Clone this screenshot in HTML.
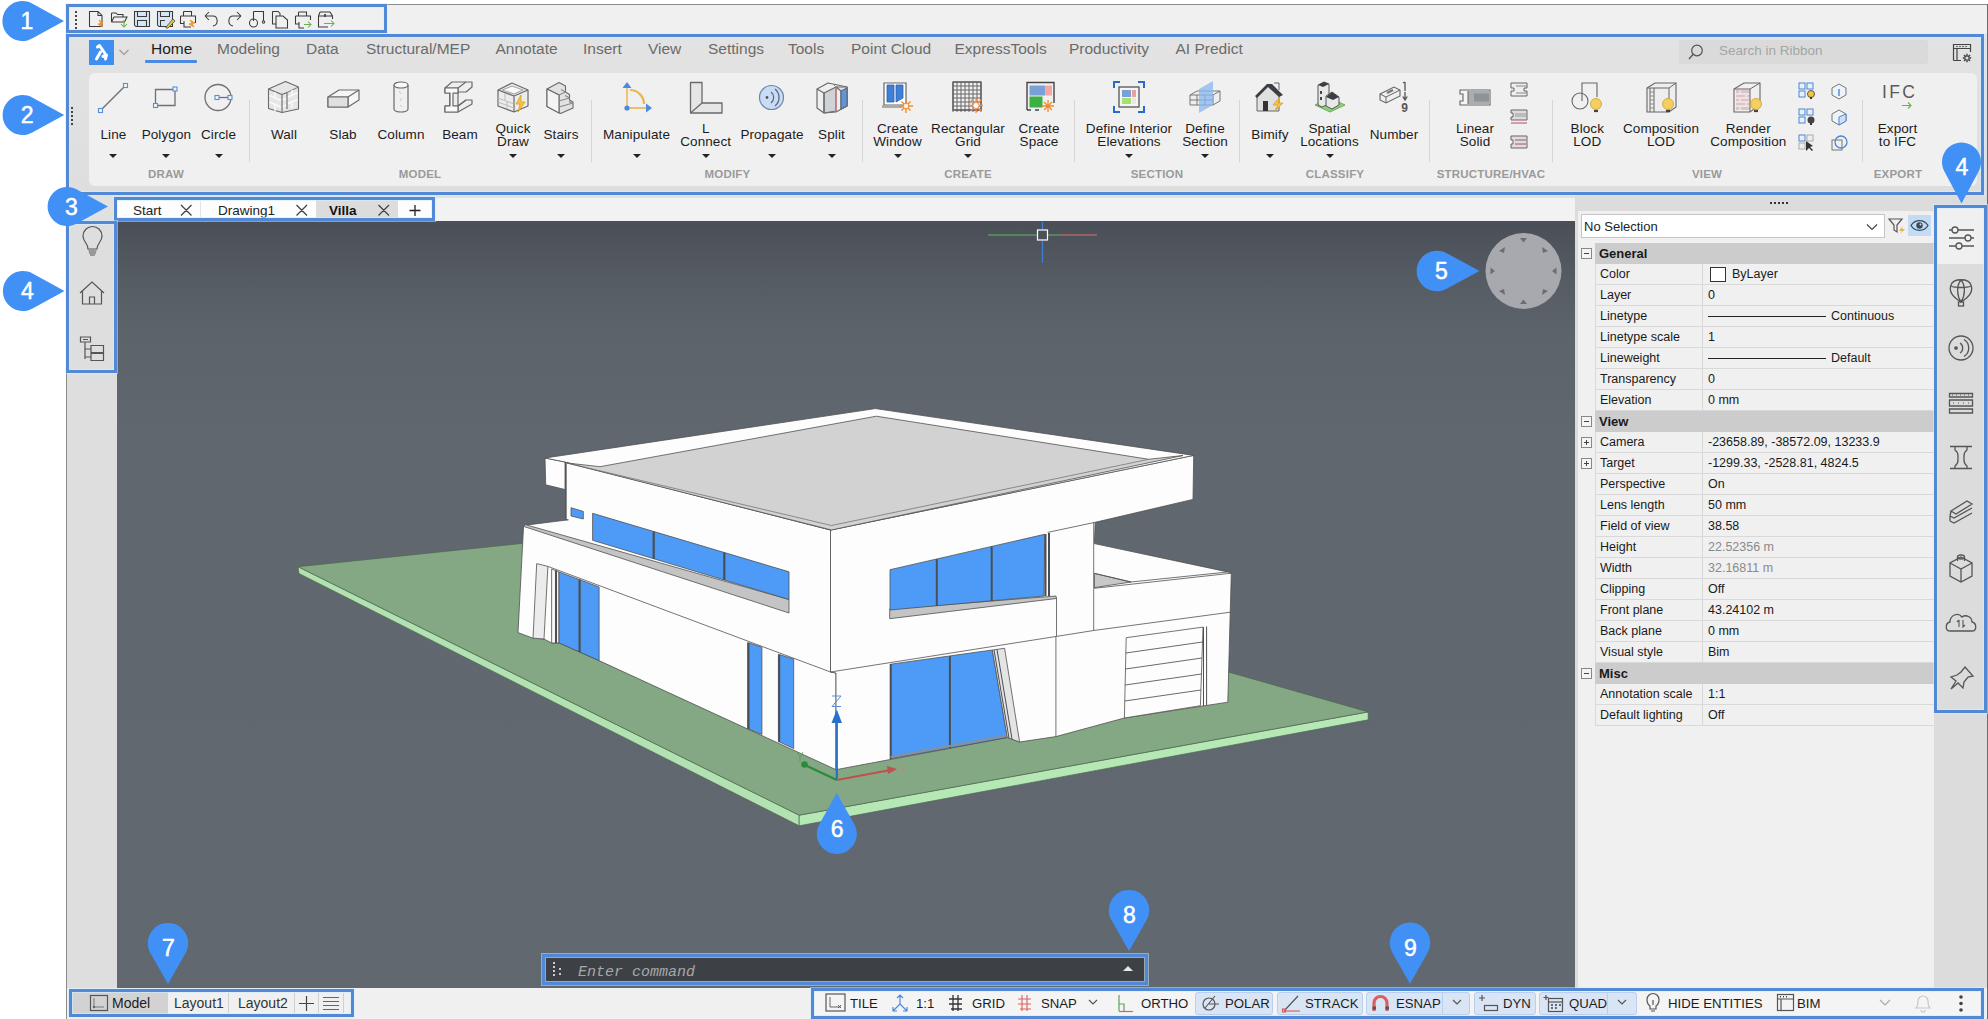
<!DOCTYPE html><html><head><meta charset="utf-8"><style>*{margin:0;padding:0;box-sizing:border-box}
html,body{width:1988px;height:1019px;overflow:hidden;background:#fff;font-family:"Liberation Sans",sans-serif;color:#1a1a1a}
.a{position:absolute;overflow:visible}
.box{position:absolute;border:3px solid #5189d6;box-shadow:inset 0 0 0 1px rgba(210,238,255,0.6),0 0 0 1px rgba(210,238,255,0.5)}
.lbl{position:absolute;font-size:13.5px;line-height:13px;letter-spacing:0.1px;text-align:center;color:#1c1c1c;white-space:nowrap}
.grp{position:absolute;font-size:11.5px;font-weight:bold;color:#9a9a9a;text-align:center;letter-spacing:0.2px;white-space:nowrap}
.tab{position:absolute;font-size:15.5px;color:#6a6a6a;top:41px;white-space:nowrap}
.dd{position:absolute;width:0;height:0;border-left:4px solid transparent;border-right:4px solid transparent;border-top:4px solid #222}
.sep{position:absolute;width:1px;background:#d6d6d6;top:100px;height:62px}
.pr{position:absolute;left:1595px;width:339px;height:21px;border-bottom:1px solid #d9d9d9;font-size:12.5px;line-height:20px}
.pr .k{position:absolute;left:5px;top:0}
.pr .v{position:absolute;left:113px;top:0}
.pr .c{position:absolute;left:107px;top:0;width:1px;height:21px;background:#d9d9d9}
.ph{position:absolute;left:1595px;width:339px;height:21px;background:#cccccc;font-size:13px;font-weight:bold;line-height:21px;padding-left:4px}
.pm{position:absolute;left:1581px;width:11px;height:11px;border:1px solid #888;background:#f4f4f4}
.pm:after{content:"";position:absolute;left:2px;top:4px;width:5px;height:1px;background:#444}
.pp:before{content:"";position:absolute;left:4px;top:2px;width:1px;height:5px;background:#444}
.st{position:absolute;top:996px;font-size:13.2px;line-height:16px;color:#1c1c1c;white-space:nowrap}
.sb{position:absolute;top:992px;height:23px;background:#d9e5f5;border:1px solid #b9cfee;border-radius:3px}
.cn{font-family:"Liberation Sans",sans-serif}
</style></head><body><div class="a" style="left:66px;top:4px;width:1922px;height:1015px;background:#f0f0f0"></div>
<div class="a" style="left:66px;top:4px;width:1922px;height:1px;background:#8c8c8c"></div>
<div class="a" style="left:66px;top:4px;width:1px;height:1015px;background:#8c8c8c"></div>
<div class="a" style="left:1987px;top:4px;width:1px;height:1015px;background:#6c6c6c"></div>
<div class="a" style="left:67px;top:5px;width:1920px;height:29px;background:#f0f0f0"></div>
<div class="a" style="left:67px;top:34px;width:1920px;height:161px;background:linear-gradient(#e3e3e3,#dedede)"></div>
<div class="a" style="left:89px;top:73px;width:1888px;height:113px;background:#f0f0f0;border-radius:6px"></div>
<div class="a" style="left:67px;top:195px;width:1508px;height:26px;background:#e1e1e1"></div>
<div class="a" style="left:117px;top:198px;width:1458px;height:23px;background:#f2f2f2"></div>
<div class="a" style="left:67px;top:221px;width:50px;height:767px;background:#dedede"></div>
<div class="a" style="left:117px;top:221px;width:1458px;height:767px;background:linear-gradient(#4a4f57 0px,#565c64 60px,#5c636b 110px,#60676f 220px,#61686f 767px)"></div>
<div class="a" style="left:1575px;top:195px;width:360px;height:793px;background:#dcdcdc"></div>
<div class="a" style="left:1578px;top:211px;width:356px;height:777px;background:#f0f0f0"></div>
<div class="a" style="left:1935px;top:195px;width:52px;height:793px;background:#dcdcdc"></div>
<div class="a" style="left:1937px;top:208px;width:47px;height:56px;background:#f0f0f0"></div>
<div class="a" style="left:67px;top:988px;width:1920px;height:31px;background:#f0f0f0"></div>
<svg class="a" style="left:66px;top:4px" width="330" height="30" viewBox="66 4 330 30" fill="none" stroke="#3a3a3a" stroke-width="1.05">
<g fill="#111" stroke="none"><circle cx="76" cy="12" r="1"/><circle cx="76" cy="16" r="1"/><circle cx="76" cy="20" r="1"/><circle cx="76" cy="24" r="1"/><circle cx="76" cy="28" r="1"/></g>
<path d="M89.5,11.5 H98 L102,15.5 V26.5 H89.5 Z M98,11.5 V15.5 H102"/>
<path d="M99,20 L103,23 L100,23.5 L102,27 L98,24 L101,23.5 Z" fill="#f0a030" stroke="#e89020" stroke-width="0.8"/>
<path d="M111.5,13 H116 L117.5,14.5 H123 V17 M111.5,13 V22 L114,17 H127 L124.5,22 H111.5"/>
<path d="M124,20 V27 M121,24 L124,27 L127,24" stroke="#6ab04c"/>
<path d="M134.5,11.5 H149.5 V26.5 H136 L134.5,25 Z" fill="#d6e6f7"/>
<path d="M137.5,11.5 V16.5 H146.5 V11.5 M137.5,26.5 V20.5 H146.5 V26.5" />
<path d="M157.5,11.5 H172.5 V26.5 H159 L157.5,25 Z" fill="#d6e6f7"/>
<path d="M160.5,11.5 V16.5 H169.5 V11.5 M160.5,26.5 V20.5 H165"/>
<path d="M166,27 L173,19 L175,21 L168,28 H166 Z" fill="#e8c840" stroke="#555" stroke-width="0.9"/>
<path d="M183.5,11.5 H191.5 V16 M183.5,16 V11.5 M180.5,16 H195.5 V23 M180.5,16 V23.5 H184 M184,21 V27 H191"/>
<path d="M190,20 L195,23 L192,23.5 L194,27 L189,24 L192,23.5 Z" fill="#f0a030" stroke="#e89020" stroke-width="0.8"/>
<path d="M205,16 L209,12 M205,16 L209,20 M205,16 H213 C218,16 219,25 213,26"/>
<path d="M241,16 L237,12 M241,16 L237,20 M241,16 H233 C228,16 227,25 233,26"/>
<path d="M253.5,11.5 H263.5 V21 M253.5,11.5 V21"/>
<circle cx="253.5" cy="23" r="4"/><circle cx="263.5" cy="22" r="1.2"/>
<path d="M272.5,11.5 H278 L280,13.5 V16 M272.5,11.5 V24 H276 M276,16 H283 L287.5,20 V28 H276 Z"/>
<path d="M298.5,12 H306.5 V16 M298.5,16 V12 M295.5,16 H310.5 V20 M295.5,16 V24 H299 M299,22 V28 H304"/>
<path d="M304,24.5 H311 M308,21.5 L311,24.5 L308,27.5" stroke="#6ab04c"/>
<path d="M320,12 H330 L332.5,16 V19 M320,12 L318.5,16 V27 H328 M318.5,16 H332.5"/>
<path d="M325,14 V17" stroke-width="1.6"/>
<path d="M324,23.5 H334 M331,20.5 L334,23.5 L331,26.5" stroke="#6ab04c"/>
</svg>

<div class="tab" style="left:151px;top:40px;color:#1e1e1e">Home</div>
<div class="tab" style="left:217px;top:40px;color:#6b6b6b">Modeling</div>
<div class="tab" style="left:306px;top:40px;color:#6b6b6b">Data</div>
<div class="tab" style="left:366px;top:40px;color:#6b6b6b">Structural/MEP</div>
<div class="tab" style="left:495.5px;top:40px;color:#6b6b6b">Annotate</div>
<div class="tab" style="left:583px;top:40px;color:#6b6b6b">Insert</div>
<div class="tab" style="left:648px;top:40px;color:#6b6b6b">View</div>
<div class="tab" style="left:708px;top:40px;color:#6b6b6b">Settings</div>
<div class="tab" style="left:788px;top:40px;color:#6b6b6b">Tools</div>
<div class="tab" style="left:851px;top:40px;color:#6b6b6b">Point Cloud</div>
<div class="tab" style="left:954.5px;top:40px;color:#6b6b6b">ExpressTools</div>
<div class="tab" style="left:1069px;top:40px;color:#6b6b6b">Productivity</div>
<div class="tab" style="left:1175.5px;top:40px;color:#6b6b6b">AI Predict</div>
<div class="a" style="left:145px;top:60px;width:52px;height:3px;background:#4a8ae0;border-radius:1px"></div>
<div class="a" style="left:89px;top:40px;width:25px;height:25px;background:#3d8ff2"></div>
<svg class="a" style="left:89px;top:40px" width="25" height="25" viewBox="0 0 25 25"><path d="M8.5,7 L10.5,5.5 L16,13.5 M11.5,12 L7.5,19 M14,16.5 L17.5,15 L16.5,19" stroke="#fff" stroke-width="3" fill="none" stroke-linecap="round" stroke-linejoin="round"/></svg>
<svg class="a" style="left:118px;top:47px" width="12" height="10" viewBox="0 0 12 10"><path d="M1.5,3 L6,7.5 L10.5,3" stroke="#9a9a9a" stroke-width="1.2" fill="none"/></svg>
<div class="a" style="left:1679px;top:40px;width:249px;height:24px;background:#dadada;border-radius:3px"></div>
<svg class="a" style="left:1686px;top:42px" width="20" height="20" viewBox="0 0 20 20"><circle cx="11" cy="8.5" r="5.3" stroke="#555" stroke-width="1.2" fill="none"/><path d="M7.2,12.3 L3,17" stroke="#555" stroke-width="1.3"/></svg>
<div class="a" style="left:1719px;top:43px;font-size:13.5px;color:#a5a5a5">Search in Ribbon</div>
<svg class="a" style="left:1950px;top:41px" width="24" height="24" viewBox="0 0 24 24" fill="none" stroke="#444" stroke-width="1.2"><path d="M3.5,19.5 V3.5 H20.5 V11 M3.5,7.5 H20.5 M3.5,19.5 H11 M7,7.5 V19.5"/><g fill="#444" stroke="none"><circle cx="7" cy="5.5" r=".8"/><circle cx="10" cy="5.5" r=".8"/><circle cx="13" cy="5.5" r=".8"/><circle cx="16" cy="5.5" r=".8"/></g><circle cx="17" cy="17" r="2.2"/><path d="M17,12.8 V14.5 M17,19.5 V21.2 M12.8,17 H14.5 M19.5,17 H21.2 M14,14 L15.2,15.2 M18.8,18.8 L20,20 M20,14 L18.8,15.2 M15.2,18.8 L14,20" stroke-width="1.4"/></svg>
<svg class="a" style="left:70px;top:106px" width="4" height="20" viewBox="0 0 4 20"><g fill="#111"><circle cx="2" cy="2" r="1"/><circle cx="2" cy="6" r="1"/><circle cx="2" cy="10" r="1"/><circle cx="2" cy="14" r="1"/><circle cx="2" cy="18" r="1"/></g></svg>
<svg class="a" style="left:97.4px;top:81px" width="32" height="32" viewBox="0 0 32 32"><path d="M4,29 L28,5" stroke="#707070" stroke-width="1.4"/><rect x="1.5" y="27.5" width="4" height="4" fill="#eef4fc" stroke="#5a8fd8" stroke-width="1.1"/><rect x="26.5" y="2.5" width="4" height="4" fill="#eef4fc" stroke="#5a8fd8" stroke-width="1.1"/></svg>
<div class="lbl" style="left:53.4px;top:128px;width:120px">Line</div>
<div class="dd" style="left:109.4px;top:154px"></div>
<svg class="a" style="left:150.4px;top:81px" width="32" height="32" viewBox="0 0 32 32"><path d="M5.5,8.5 H25 V24.5 H5.5 Z" stroke="#707070" stroke-width="1.3" fill="none"/><rect x="23.0" y="6.0" width="4" height="4" fill="#eef4fc" stroke="#5a8fd8" stroke-width="1.1"/><rect x="3.5" y="22.5" width="4" height="4" fill="#eef4fc" stroke="#5a8fd8" stroke-width="1.1"/></svg>
<div class="lbl" style="left:106.4px;top:128px;width:120px">Polygon</div>
<div class="dd" style="left:162.4px;top:154px"></div>
<svg class="a" style="left:202.5px;top:81px" width="32" height="32" viewBox="0 0 32 32"><circle cx="15" cy="16.5" r="13" stroke="#707070" stroke-width="1.3" fill="none"/><path d="M14,16.5 H27" stroke="#707070" stroke-width="1.3"/><rect x="12.0" y="14.5" width="4" height="4" fill="#eef4fc" stroke="#5a8fd8" stroke-width="1.1"/><rect x="25.0" y="14.5" width="4" height="4" fill="#eef4fc" stroke="#5a8fd8" stroke-width="1.1"/></svg>
<div class="lbl" style="left:158.5px;top:128px;width:120px">Circle</div>
<div class="dd" style="left:214.5px;top:154px"></div>
<svg class="a" style="left:268.0px;top:81px" width="32" height="32" viewBox="0 0 32 32"><g stroke="#6a6a6a" stroke-width="1.1" stroke-linejoin="round"><path d="M0.5,8 L17.5,0.5 L30.5,6 V28 L14,31.5 L0.5,27.5 Z" fill="#e6e6e6"/><path d="M0.5,8 L14,13.5 V31.5 M14,13.5 L19,11.5 V28" fill="none"/><path d="M19,11.5 L30.5,6" fill="none" stroke="#888"/><path d="M1.5,14.5 L13,19.5 M1.5,21 L13,26 M15,19 L18,17.5 M15,25.5 L18,24 M20,16 L29.5,12 M20,22.5 L29.5,18.5 M7,11 V17 M7,24 V30 M24,9 V15 M24,21 V27" stroke="#fafafa" stroke-width="1.4" fill="none"/></g></svg>
<div class="lbl" style="left:224.0px;top:128px;width:120px">Wall</div>
<svg class="a" style="left:327.0px;top:81px" width="32" height="32" viewBox="0 0 32 32"><g stroke="#6a6a6a" stroke-width="1.2" stroke-linejoin="round"><path d="M1,16 L12,9 L32,9 L32,19 L21,26 L1,26 Z" fill="#f6f6f6"/><path d="M1,16 L21,16 L32,9 M21,16 V26" fill="none"/><path d="M1,16 H21 V26 H1 Z" fill="#e0e0e0"/></g></svg>
<div class="lbl" style="left:283.0px;top:128px;width:120px">Slab</div>
<svg class="a" style="left:385.0px;top:81px" width="32" height="32" viewBox="0 0 32 32"><g stroke="#6a6a6a" stroke-width="1.2"><path d="M9,4 V28 A7,3 0 0 0 23,28 V4" fill="#f0f0f0"/><ellipse cx="16" cy="4" rx="7" ry="3" fill="#fafafa"/><path d="M14,10 l2,3 M17,17 l-2,3 M15,24 l2,2" stroke="#c8c8c8" stroke-width="1"/></g></svg>
<div class="lbl" style="left:341.0px;top:128px;width:120px">Column</div>
<svg class="a" style="left:444.0px;top:81px" width="32" height="32" viewBox="0 0 32 32"><g stroke="#6a6a6a" stroke-width="1.2" stroke-linejoin="round" fill="#eeeeee"><path d="M1,31 V25 H6 V12 H1 V7 L8,1 H28 V6 L22,11 H10 L14,12 V25 L22,19 H28 V23 L14,31 Z"/><path d="M1,7 H14 L22,1 M14,7 V12 H10 M1,25 H14 V31 M14,25 L22,19 M6,12 V25" fill="none"/><path d="M1,7 H14 V12 H9 V25 H14 V31 H1 V25 H6 V12 H1 Z" fill="#f8f8f8"/></g></svg>
<div class="lbl" style="left:400.0px;top:128px;width:120px">Beam</div>
<svg class="a" style="left:497.0px;top:81px" width="32" height="32" viewBox="0 0 32 32"><g stroke="#6a6a6a" stroke-width="1.2" stroke-linejoin="round"><path d="M1,9 L15,2 L31,9 V25 L17,31 L1,25 Z" fill="#ececec"/><path d="M1,9 L17,15 L31,9 M17,15 V31" fill="none"/><path d="M5,9 L15,5 L26,9 L17,13 Z" fill="#fafafa" stroke="#aaa"/><path d="M1,17 L17,23 M1,21 L17,27 M8,12 V19 M10,21 V27" stroke="#bbb" stroke-width="1" fill="none"/></g><path d="M24,14 L19,23 H23 L21,31 L28,21 H24 Z" fill="#f5c542" stroke="#e0a020" stroke-width="0.8"/></svg>
<div class="lbl" style="left:453.0px;top:122px;width:120px">Quick</div>
<div class="lbl" style="left:453.0px;top:135px;width:120px">Draw</div>
<div class="dd" style="left:509.0px;top:154px"></div>
<svg class="a" style="left:545.0px;top:81px" width="32" height="32" viewBox="0 0 32 32"><g stroke="#6a6a6a" stroke-width="1.1" stroke-linejoin="round"><path d="M2,8 L14,1.5 L20.5,5 V11 L24.5,13.5 V19 L28,21 V27 L15.5,32.5 L2,25.5 Z" fill="#e2e2e2"/><path d="M2,8 L14,14 V32" fill="none"/><path d="M2,8 L14,14 L14,32 L2,25.5 Z" fill="#f4f4f4"/><path d="M14,14 L20.5,11 M14,20 L24.5,17 M14,26 L28,22 M20.5,11 L16,8.5 M24.5,17 L20,14.5 M28,23 L24,20.5" fill="none" stroke="#8a8a8a"/></g></svg>
<div class="lbl" style="left:501.0px;top:128px;width:120px">Stairs</div>
<div class="dd" style="left:557.0px;top:154px"></div>
<svg class="a" style="left:620.5px;top:81px" width="32" height="32" viewBox="0 0 32 32"><path d="M6,7 V27 H25" stroke="#e8c070" stroke-width="1.8" fill="none"/><path d="M9,9 A14,14 0 0 1 23,23" stroke="#e8b850" stroke-width="2.2" fill="none"/><path d="M6,1 L10.5,7 H1.5 Z M31,27 L25,22.5 V31.5 Z" fill="#4a8ae0"/><circle cx="6" cy="27" r="2.6" fill="#4a8ae0"/></svg>
<div class="lbl" style="left:576.5px;top:128px;width:120px">Manipulate</div>
<div class="dd" style="left:632.5px;top:154px"></div>
<svg class="a" style="left:689.7px;top:81px" width="32" height="32" viewBox="0 0 32 32"><g stroke="#6a6a6a" stroke-width="1.3" stroke-linejoin="round" fill="#e6e6e6"><path d="M0.5,1.5 H12 V22 H32 V32 H0.5 Z"/><path d="M0.5,32 L12,22" fill="none"/></g></svg>
<div class="lbl" style="left:645.7px;top:122px;width:120px">L</div>
<div class="lbl" style="left:645.7px;top:135px;width:120px">Connect</div>
<div class="dd" style="left:701.7px;top:154px"></div>
<svg class="a" style="left:756.0px;top:81px" width="32" height="32" viewBox="0 0 32 32"><circle cx="15.5" cy="16.5" r="12" fill="#c9dcf5" stroke="#6f86a8" stroke-width="1.2"/><circle cx="11" cy="16.5" r="1.4" fill="#555"/><path d="M15,11 A7,7 0 0 1 15,22 M19,8 A11,11 0 0 1 19,25" stroke="#5a6a80" stroke-width="1.3" fill="none"/></svg>
<div class="lbl" style="left:712.0px;top:128px;width:120px">Propagate</div>
<div class="dd" style="left:768.0px;top:154px"></div>
<svg class="a" style="left:815.5px;top:81px" width="32" height="32" viewBox="0 0 32 32"><g stroke="#6a6a6a" stroke-width="1.2" stroke-linejoin="round"><path d="M1,8 L12,2 L31,6 V25 L20,31 L8,32 L1,27 Z" fill="#efefef"/><path d="M8,12 L20,6 V30 L8,32 Z" fill="#cfd2d6"/><path d="M20,6 L31,6 V25 L25,28 L25,10 Z" fill="#d8e6f8"/><path d="M25,10 L31,7 V25 L25,28 Z" fill="#5e95e0"/><path d="M1,8 L8,12 V32" fill="none"/></g><path d="M18,4 L20,6 V30" stroke="#e07070" stroke-width="1" fill="none"/></svg>
<div class="lbl" style="left:771.5px;top:128px;width:120px">Split</div>
<div class="dd" style="left:827.5px;top:154px"></div>
<svg class="a" style="left:881.5px;top:81px" width="32" height="32" viewBox="0 0 32 32"><path d="M2,2 H24 V24 H2 Z" fill="#fff" stroke="#666" stroke-width="1.2"/><path d="M5,4 H12 V21 H5 Z M14,4 H21 V17 L14,21 Z" fill="#3f7fd8" stroke="#2a5fa8" stroke-width="0.8"/><path d="M0,24 H22 L20,27 H0 Z" fill="#aaa"/><g stroke="#f08a30" stroke-width="1.4"><path d="M24,18 V32 M17,25 H31 M19.5,20.5 L28.5,29.5 M28.5,20.5 L19.5,29.5"/></g><circle cx="24" cy="25" r="2.8" fill="#fff5e0" stroke="#f08a30" stroke-width="1"/></svg>
<div class="lbl" style="left:837.5px;top:122px;width:120px">Create</div>
<div class="lbl" style="left:837.5px;top:135px;width:120px">Window</div>
<div class="dd" style="left:893.5px;top:154px"></div>
<svg class="a" style="left:952.0px;top:81px" width="32" height="32" viewBox="0 0 32 32"><path d="M1,1 V31 M5,1 V31 M9,1 V31 M13,1 V31 M17,1 V31 M21,1 V31 M25,1 V31 M29,1 V31 M1,1 H29 M1,5 H29 M1,9 H29 M1,13 H29 M1,17 H29 M1,21 H29 M1,25 H29 M1,29 H29 " stroke="#666" stroke-width="1" fill="none"/><rect x="1" y="1" width="28" height="28" fill="none" stroke="#555" stroke-width="1.2"/><g stroke="#f09050" stroke-width="1.3"><path d="M24,17 V32 M17,24.5 H31 M19,19 L29,30 M29,19 L19,30"/></g><circle cx="24" cy="24.5" r="3" fill="#fff" stroke="#f09050"/></svg>
<div class="lbl" style="left:908.0px;top:122px;width:120px">Rectangular</div>
<div class="lbl" style="left:908.0px;top:135px;width:120px">Grid</div>
<div class="dd" style="left:964.0px;top:154px"></div>
<svg class="a" style="left:1023.0px;top:81px" width="32" height="32" viewBox="0 0 32 32"><path d="M4,29 V1.5 H31 V22 M4,29 H8 M12,29 H16" stroke="#444" stroke-width="1.4" fill="none"/><rect x="6.5" y="4.5" width="16" height="10" fill="#7aa0d8"/><rect x="23" y="4.5" width="6" height="10" fill="#f0a8a0"/><rect x="6.5" y="15.5" width="13" height="11" fill="#3cb043"/><g stroke="#f08a30" stroke-width="1.3"><path d="M25,19 V31 M19,25 H31 M21,21 L29,29 M29,21 L21,29"/></g></svg>
<div class="lbl" style="left:979.0px;top:122px;width:120px">Create</div>
<div class="lbl" style="left:979.0px;top:135px;width:120px">Space</div>
<svg class="a" style="left:1113.0px;top:81px" width="32" height="32" viewBox="0 0 32 32"><path d="M1,7 V1 H7 M25,1 H31 V7 M1,25 V31 H7 M25,31 H31 V25" stroke="#2a6ad0" stroke-width="2" fill="none"/><rect x="6" y="6" width="20" height="20" fill="#f4f4f4" stroke="#555" stroke-width="1.3"/><rect x="9" y="9" width="9" height="7" fill="#7aa0d8"/><rect x="19" y="9" width="4" height="7" fill="#e8a0a0"/><rect x="9" y="17" width="9" height="6" fill="#a8e070"/><rect x="19" y="17" width="4" height="6" fill="#e8e8e8"/></svg>
<div class="lbl" style="left:1069.0px;top:122px;width:120px">Define Interior</div>
<div class="lbl" style="left:1069.0px;top:135px;width:120px">Elevations</div>
<div class="dd" style="left:1125.0px;top:154px"></div>
<svg class="a" style="left:1189.0px;top:81px" width="32" height="32" viewBox="0 0 32 32"><g stroke="#777" stroke-width="1" fill="#eeeeee"><path d="M1,14 L8,10 H31 V20 L24,24 H1 Z"/><path d="M1,14 H24 L31,10 M24,14 V24 M1,19 H24 M8,14 V24 M16,14 V24" fill="none"/></g><path d="M10,8 L24,0 V24 L10,32 Z" fill="#8ab8f0" opacity="0.75"/></svg>
<div class="lbl" style="left:1145.0px;top:122px;width:120px">Define</div>
<div class="lbl" style="left:1145.0px;top:135px;width:120px">Section</div>
<div class="dd" style="left:1201.0px;top:154px"></div>
<svg class="a" style="left:1254.0px;top:81px" width="32" height="32" viewBox="0 0 32 32"><path d="M3,14 L14,3 L25,14 V30 H3 Z" fill="#e0e0e0" stroke="#666" stroke-width="1"/><path d="M1,15 L13,3 H18 L29,14 L25,16 L14,6 L3,17 Z" fill="#3a3f45"/><rect x="9" y="20" width="5" height="10" fill="#333"/><path d="M20,2 H25 V9" stroke="#666" fill="none"/><path d="M26,16 L19,24 H24 L20,31 L29,22 H24 Z" fill="#f5c542" stroke="#e0a020" stroke-width="0.8"/></svg>
<div class="lbl" style="left:1210.0px;top:128px;width:120px">Bimify</div>
<div class="dd" style="left:1266.0px;top:154px"></div>
<svg class="a" style="left:1313.5px;top:81px" width="32" height="32" viewBox="0 0 32 32"><path d="M1,24 L16,31 L31,24 L16,17 Z" fill="#8fd080" stroke="#6ab04c"/><path d="M4,4 L10,1 L15,3 V23 L8,26 L4,24 Z" fill="#e8e8e8" stroke="#555"/><path d="M4,4 L10,1 L15,3 L9,6 Z" fill="#3a3f45"/><rect x="6" y="10" width="2" height="3" fill="#444"/><rect x="6" y="16" width="2" height="3" fill="#444"/><path d="M12,15 L18,11 L25,16 V24 L18,28 L12,25 Z" fill="#e8e8e8" stroke="#555"/><path d="M12,16 L18,11 L25,16 L19,19 Z" fill="#3a3f45"/></svg>
<div class="lbl" style="left:1269.5px;top:122px;width:120px">Spatial</div>
<div class="lbl" style="left:1269.5px;top:135px;width:120px">Locations</div>
<div class="dd" style="left:1325.5px;top:154px"></div>
<svg class="a" style="left:1378.0px;top:81px" width="32" height="32" viewBox="0 0 32 32"><path d="M2,13 L16,6 L22,9 V15 L8,22 L2,19 Z" fill="#eeeeee" stroke="#666" stroke-width="1.1"/><path d="M2,13 L8,16 L22,9 M8,16 V22" stroke="#666" fill="none"/><path d="M9,12 L15,9" stroke="#777" stroke-width="2"/><path d="M27,1 V10 M25,2 L27,1 M27,11 V18 M24.8,15.5 L27,19 L29.2,15.5" stroke="#555" stroke-width="1.3" fill="none"/><text x="23.2" y="31" font-size="12" font-weight="bold" fill="#555" class="cn">9</text></svg>
<div class="lbl" style="left:1334.0px;top:128px;width:120px">Number</div>
<svg class="a" style="left:1459.0px;top:81px" width="32" height="32" viewBox="0 0 32 32"><path d="M1,9 H31 V24 H1 V20 H4 V13 H1 Z" fill="#f4f4f4" stroke="#666" stroke-width="1.1"/><rect x="9" y="10" width="22" height="13" fill="#a9adb2"/><rect x="15" y="12.5" width="15" height="8" fill="#8e9398"/><path d="M9,10 V23" stroke="#666"/></svg>
<div class="lbl" style="left:1415.0px;top:122px;width:120px">Linear</div>
<div class="lbl" style="left:1415.0px;top:135px;width:120px">Solid</div>
<svg class="a" style="left:1571.3px;top:81px" width="32" height="32" viewBox="0 0 32 32"><circle cx="9" cy="20" r="8" fill="none" stroke="#666" stroke-width="1.1"/><path d="M11,20 V2 H26 V16" stroke="#666" stroke-width="1.1" fill="none"/><circle cx="25" cy="23" r="5.5" fill="#f5cf60" stroke="#caa030" stroke-width="0.8"/><path d="M23,30 H27" stroke="#444" stroke-width="2.2"/></svg>
<div class="lbl" style="left:1527.3px;top:122px;width:120px">Block</div>
<div class="lbl" style="left:1527.3px;top:135px;width:120px">LOD</div>
<svg class="a" style="left:1645.0px;top:81px" width="32" height="32" viewBox="0 0 32 32"><path d="M2,7 L10,2 H31 V26 L24,31 H2 Z" fill="#eeeeee" stroke="#666" stroke-width="1.1"/><path d="M2,7 H24 L31,2 M24,7 V31 M5,7 V31 M9,7 V31" stroke="#666" fill="none"/><path d="M5,11 H9 M5,15 H9 M5,19 H9 M5,23 H9 M5,27 H9" stroke="#888"/><circle cx="23" cy="23" r="5.5" fill="#f5cf60" stroke="#caa030" stroke-width="0.8"/><path d="M21,30 H25" stroke="#444" stroke-width="2.2"/></svg>
<div class="lbl" style="left:1601.0px;top:122px;width:120px">Composition</div>
<div class="lbl" style="left:1601.0px;top:135px;width:120px">LOD</div>
<svg class="a" style="left:1732.3px;top:81px" width="32" height="32" viewBox="0 0 32 32"><path d="M2,8 L12,2 H28 V24 L18,31 H2 Z" fill="#f0f0f0" stroke="#666" stroke-width="1.1"/><path d="M4,9 H18 V29 H4 Z" fill="#dcc4c8"/><path d="M4,13 H18 M4,17 H18 M4,21 H18 M4,25 H18 M8,9 V13 M14,13 V17 M8,17 V21 M14,21 V25 M8,25 V29" stroke="#f4eaea" stroke-width="1.3"/><path d="M2,8 H18 L28,2 M18,8 V31" stroke="#666" fill="none"/><circle cx="24" cy="23" r="5.5" fill="#f5cf60" stroke="#caa030" stroke-width="0.8"/><path d="M22,30 H26" stroke="#444" stroke-width="2.2"/></svg>
<div class="lbl" style="left:1688.3px;top:122px;width:120px">Render</div>
<div class="lbl" style="left:1688.3px;top:135px;width:120px">Composition</div>
<svg class="a" style="left:1881.5px;top:81px" width="32" height="32" viewBox="0 0 32 32"><text x="0" y="17" font-size="17.5" fill="#5a5a5a" class="cn" letter-spacing="2.4">IFC</text><path d="M20,24.5 H29 M26,21.5 L29,24.5 L26,27.5" stroke="#6ab04c" stroke-width="1.1" fill="none"/></svg>
<div class="lbl" style="left:1837.5px;top:122px;width:120px">Export</div>
<div class="lbl" style="left:1837.5px;top:135px;width:120px">to IFC</div>
<svg class="a" style="left:1509px;top:80px" width="20" height="20" viewBox="0 0 20 20"><path d="M2,3 H18 V8 H15 V11 H18 V16 H2 V11 H5 V8 H2 Z" fill="#eee" stroke="#666"/><path d="M7,6 H18 M7,13 H18" stroke="#888"/></svg>
<svg class="a" style="left:1509px;top:106px" width="20" height="20" viewBox="0 0 20 20"><path d="M2,4 H18 V14 H2 V11 H4 V7 H2 Z" fill="#ddd" stroke="#666"/><path d="M6,8 H17 M6,10 H17" stroke="#999"/><path d="M2,17 H18" stroke="#d06070" stroke-width="1.2"/></svg>
<svg class="a" style="left:1509px;top:132px" width="20" height="20" viewBox="0 0 20 20"><path d="M2,4 H18 V16 H2 V12 H4 V8 H2 Z" fill="#ddd" stroke="#666"/><path d="M6,8 H17 M6,12 H17" stroke="#b05060"/></svg>
<svg class="a" style="left:1797px;top:81px" width="20" height="20" viewBox="0 0 20 20"><rect x="2" y="2" width="6" height="6" fill="#e8f0fc" stroke="#4a86d4"/><rect x="10" y="2" width="6" height="6" fill="#e8f0fc" stroke="#4a86d4"/><rect x="2" y="10" width="6" height="6" fill="#e8f0fc" stroke="#4a86d4"/><circle cx="14" cy="13" r="3.5" fill="#f5c542" stroke="#555"/><path d="M13,17 H15" stroke="#333" stroke-width="2"/></svg>
<svg class="a" style="left:1797px;top:107px" width="20" height="20" viewBox="0 0 20 20"><rect x="2" y="2" width="6" height="6" fill="#e8f0fc" stroke="#4a86d4"/><rect x="10" y="2" width="6" height="6" fill="#e8f0fc" stroke="#4a86d4"/><rect x="2" y="10" width="6" height="6" fill="#e8f0fc" stroke="#4a86d4"/><circle cx="14" cy="13" r="3.5" fill="#444"/><path d="M13,17 H15" stroke="#333" stroke-width="2"/></svg>
<svg class="a" style="left:1797px;top:133px" width="20" height="20" viewBox="0 0 20 20"><rect x="2" y="2" width="6" height="6" fill="#e8f0fc" stroke="#4a86d4"/><rect x="10" y="2" width="6" height="6" fill="#eee" stroke="#aaa"/><rect x="2" y="10" width="6" height="6" fill="#eee" stroke="#aaa"/><path d="M9,8 L9,18 L12,15 L15,18 L16,17 L13,14 L16,13 Z" fill="#333"/></svg>
<svg class="a" style="left:1829px;top:81px" width="20" height="20" viewBox="0 0 20 20"><path d="M10,3 L17,7 V14 L10,18 L3,14 V7 Z" fill="#eef3fa" stroke="#777"/><path d="M10,8 V15" stroke="#4a86d4" stroke-width="1.4"/></svg>
<svg class="a" style="left:1829px;top:107px" width="20" height="20" viewBox="0 0 20 20"><path d="M10,3 L17,7 V14 L10,18 L3,14 V7 Z" fill="#eef3fa" stroke="#777"/><path d="M10,10 L17,7 V14 L10,18 Z" fill="#cfe0f7" stroke="#4a86d4"/></svg>
<svg class="a" style="left:1829px;top:133px" width="20" height="20" viewBox="0 0 20 20"><rect x="3" y="7" width="10" height="10" fill="none" stroke="#777"/><circle cx="12" cy="9" r="6" fill="none" stroke="#4a86d4" stroke-width="1.3"/></svg>
<div class="sep" style="left:249px"></div>
<div class="sep" style="left:591px"></div>
<div class="sep" style="left:862px"></div>
<div class="sep" style="left:1074px"></div>
<div class="sep" style="left:1239px"></div>
<div class="sep" style="left:1429px"></div>
<div class="sep" style="left:1552px"></div>
<div class="sep" style="left:1862px"></div>
<div class="grp" style="left:96px;top:168px;width:140px">DRAW</div>
<div class="grp" style="left:350px;top:168px;width:140px">MODEL</div>
<div class="grp" style="left:657.5px;top:168px;width:140px">MODIFY</div>
<div class="grp" style="left:898px;top:168px;width:140px">CREATE</div>
<div class="grp" style="left:1087px;top:168px;width:140px">SECTION</div>
<div class="grp" style="left:1265px;top:168px;width:140px">CLASSIFY</div>
<div class="grp" style="left:1421px;top:168px;width:140px">STRUCTURE/HVAC</div>
<div class="grp" style="left:1637px;top:168px;width:140px">VIEW</div>
<div class="grp" style="left:1828px;top:168px;width:140px">EXPORT</div>
<div class="a" style="left:117px;top:200px;width:315px;height:18px;background:#fdfdfd"></div>
<div class="a" style="left:200px;top:201px;width:1px;height:16px;background:#e4e4e4"></div>
<div class="a" style="left:316px;top:200px;width:82px;height:18px;background:#dcdcdc"></div>
<div class="a" style="left:133px;top:203px;font-size:13.5px;color:#222">Start</div>
<div class="a" style="left:218px;top:203px;font-size:13.5px;color:#222">Drawing1</div>
<div class="a" style="left:329px;top:203px;font-size:13.5px;color:#111;font-weight:bold">Villa</div>
<svg class="a" style="left:117px;top:200px" width="315" height="18" viewBox="117 200 315 18" stroke="#444" stroke-width="1.3" fill="none">
<path d="M181,205 L191.5,215.5 M191.5,205 L181,215.5 M296.5,205 L307,215.5 M307,205 L296.5,215.5 M378.5,205 L389,215.5 M389,205 L378.5,215.5"/>
<path d="M415,205 V216 M409.5,210.5 H420.5" stroke="#222"/>
</svg>
<svg class="a" style="left:67px;top:222px" width="50" height="150" viewBox="67 222 50 150" stroke="#555" stroke-width="1.2" fill="none">
<path d="M88,249 C88,243 83,242 83,236 A9.5,9.5 0 0 1 102,236 C102,242 97,243 97,249 Z"/>
<path d="M88.5,251 H96.5 M89,253 H96 M90,255 H95"/>
<path d="M80,293 L92,282 L104,293 M82.5,291 V304 H101.5 V291 M89.5,304 V297 H94.5 V304"/>
<path d="M80.5,337 H90.5 V342 H80.5 Z M85,342 V359 M85,349 H91 M85,357 H91 M91,345.5 H103.5 V352.5 H91 Z M91,353.5 H103.5 V360.5 H91 Z"/>
<path d="M83,339.5 H88" stroke-width="1"/>
</svg>

<svg class="a" style="left:0;top:0" width="1988" height="1019" viewBox="0 0 1988 1019">
<defs><clipPath id="vp"><rect x="117" y="221" width="1458" height="767"/></clipPath></defs>
<g clip-path="url(#vp)">
<!-- crosshair -->
<path d="M988,235 H1037 M1048,235 H1060" stroke="#5cb85c" stroke-width="1.2"/>
<path d="M1060,235 H1097" stroke="#d9706f" stroke-width="1.2"/>
<path d="M1042.5,222 V229 M1042.5,241 V263" stroke="#3f7fd8" stroke-width="1.2"/>
<rect x="1037.5" y="230" width="10" height="10" fill="none" stroke="#fff" stroke-width="1.2"/>
<!-- viewcube -->
<circle cx="1523.5" cy="271" r="38" fill="#a7a9ae"/>
<g fill="#6a6d72">
<path d="M1520,238 H1527 L1523.5,242.5 Z"/><path d="M1520,304 H1527 L1523.5,299.5 Z"/>
<path d="M1490.5,267.5 V274.5 L1495,271 Z"/><path d="M1556.5,267.5 V274.5 L1552,271 Z"/>
<path d="M1499,251 L1505,247 L1504,253 Z"/><path d="M1548,251 L1542,247 L1543,253 Z"/>
<path d="M1499,291 L1505,295 L1504,289 Z"/><path d="M1548,291 L1542,295 L1543,289 Z"/>
</g>
<!-- ground plane -->
<g stroke="#4f6a4f" stroke-width="0.7" stroke-linejoin="round">
<path d="M298,566.7 L799.2,815.2 L799.2,825.8 L299,573.5 Z" fill="#b2e2b2"/>
<path d="M799.2,815.2 L1368.2,711.9 L1368.2,719.8 L799.2,825.8 Z" fill="#b6e8b6"/>
<path d="M298,566.7 L709,524 L1368.2,711.9 L799.2,815.2 Z" fill="#84a884"/>
</g>
<g stroke="#505050" stroke-width="0.8" stroke-linejoin="round" fill="#fdfdfd">
<!-- roof back-left piece -->
<path d="M545,458 L565,462 L565,489.5 L545.7,484.8 Z"/>
<!-- left wing silhouette -->
<path d="M566,462 L830.5,530 L830.5,672 L836,673 L836,769.7 L599,660.6 L559,642.9 L551.6,643 L544,639 L533,638.2 L518,632.6 L523.6,525.4 L568.4,519.8 L566,519.8 Z"/>
<!-- right side silhouette -->
<path d="M830.5,530 L1193.7,455.4 L1193,499.4 L1095.2,522.3 L1094.4,543.6 L1227.6,571.9 L1231.3,573.2 L1227.8,702.2 L1124.4,718 L1055.9,736.6 L1019.6,742 L1007.3,737.5 L836,769.7 L836,673 L830.5,672 Z"/>
</g>
<g stroke="#505050" stroke-width="0.8" stroke-linejoin="round">
<!-- roof top -->
<path d="M545,458 L875.4,408.6 L1193.7,455.4 L830.5,530 L565,462 Z" fill="#fdfdfd"/>
<path d="M567,463 L600,466.7 L876.4,416.2 L1148.7,459.3 L1183,455.5 L831.5,530 Z" fill="#d2d2d2"/>
<path d="M567,463 L831.5,525.5 L1148.7,459.3" fill="none" stroke="#6a6a6a" stroke-width="0.7"/>
<!-- leg inner face -->
<path d="M533,638.2 L536.7,563.6 L547.9,566.4 L544,639 Z" fill="#ececec"/>
<path d="M551.6,569 L559,572 L559,642.9 L551.6,643 Z" fill="#f6f6f6"/>
<!-- soffit line -->
<path d="M547.9,566.4 L830.5,672" fill="none"/>
<!-- sill band -->
<path d="M525,524.5 L789,599.5 L789,613 L523.6,526.4 Z" fill="#c4c4c4"/>
<!-- upper-left wall edge -->
<path d="M566,462 V519.8" fill="none"/>
<!-- ribbon window -->
<path d="M592.6,513.3 L789,571.8 L789,599.5 L592.6,540.3 Z" fill="#4d9bf6"/>
<path d="M571,507.7 L583.3,511.4 L583.3,519 L571,516 Z" fill="#4d9bf6"/>
<path d="M653.7,531.5 V559 M724.3,552.5 V580" stroke="#4a4f55" stroke-width="2.2"/>
<!-- ground floor left window -->
<path d="M559,572 L599.1,587 L599.1,660.6 L559,642.9 Z" fill="#4d9bf6"/>
<path d="M579.6,579.5 V652" stroke="#4a4f55" stroke-width="2.2"/>
<path d="M556,570.5 V643" stroke="#4a4f55" stroke-width="2"/>
<!-- narrow windows -->
<path d="M747.7,642.5 L761.9,647.2 L761.9,734.4 L747.7,728.5 Z" fill="#4d9bf6"/>
<path d="M778.4,654.3 L793.7,659 L793.7,748.5 L778.4,741.5 Z" fill="#4d9bf6"/>
<path d="M748.5,643 V729 M779.2,655 V742" stroke="#4a4f55" stroke-width="2"/>
<!-- right face details -->
<path d="M1094.4,573.4 L1131,582 L1094.4,587.6 Z" fill="#c8c8c8"/>
<path d="M1094.4,573.4 L1131,582 L1227.6,572 M1094.4,588.3 L1231.3,573.2 M1093.7,522 V630.5 M1095.2,522.3 L1047.6,532.4 M830.5,672 L1056.5,636.4 L1093.7,630.5 L1231,612.1 M1056.5,598 V636.4 M1055.9,636.4 V736.6" fill="none"/>
<path d="M889.7,609 L1056,596 L1056.5,598.5 L889.7,618.7 Z" fill="#c4c4c4"/>
<path d="M890,569.7 L1044.7,534.3 L1044,596 L890,610 Z" fill="#4d9bf6"/>
<path d="M936.8,559 V606 M991.7,546.5 V601 M1045.5,534 V596 M1049,533 V596" stroke="#4a4f55" stroke-width="2"/>
<path d="M890.7,664.2 L992.3,650 L1007.3,737.5 L890.7,758.7 Z" fill="#4d9bf6"/>
<path d="M949.9,656 V748 M890.7,664 V759" stroke="#4a4f55" stroke-width="2"/>
<path d="M890.7,757 L1007,735.5" stroke="#8a9098" stroke-width="2"/>
<path d="M992.3,650 L1004.6,648.3 L1019.6,742 L1007.3,737.5 Z" fill="#e4e4e4"/>
<path d="M994,650 L1009,738 M997,649.5 L1012,739" stroke="#4a4f55" stroke-width="1"/>
<path d="M1126.2,637.7 L1203,627.1 L1200.4,705.7 L1124.4,718 Z" fill="#fdfdfd"/>
<path d="M1125.8,653 L1202.5,642 M1125.5,669 L1202,658 M1125.2,685 L1201.5,674 M1124.8,701 L1201,690" fill="none" stroke="#444"/>
<path d="M1203.5,627 V706 M1206.6,626.5 V705" fill="none" stroke="#505050" stroke-width="1"/>
<path d="M566,574 L566,574" fill="none"/>
</g>
<!-- UCS -->
<path d="M836.8,780 V722" stroke="#2a6fc8" stroke-width="2.2"/>
<path d="M831.5,723 L836.8,709.5 L842,723 Z" fill="#2a6fc8"/>
<path d="M832,696 H841 L832,706.5 H841" fill="none" stroke="#5a8fd8" stroke-width="1"/>
<path d="M836.8,780 L806,765.5" stroke="#2b8a3e" stroke-width="2.2"/><circle cx="804.5" cy="764.5" r="3.3" fill="#2b8a3e"/>
<path d="M800,757 l-3,-5 M800,757 l3,-5 M800,757 v5" stroke="#4aa060" stroke-width="0.8" fill="none"/>
<path d="M837,780 L888,770.5" stroke="#c0504d" stroke-width="2"/><path d="M887,766 L897,769 L888,774 Z" fill="#c0504d"/>
<path d="M900,765 l5,6 M905,765 l-5,6" stroke="#c88080" stroke-width="0.8"/>
</g>
</svg>

<svg class="a" style="left:1768px;top:200px" width="22" height="6"><g fill="#333"><rect x="2" y="2" width="2" height="2"/><rect x="6" y="2" width="2" height="2"/><rect x="10" y="2" width="2" height="2"/><rect x="14" y="2" width="2" height="2"/><rect x="18" y="2" width="2" height="2"/></g></svg>
<div class="a" style="left:1581px;top:214px;width:304px;height:24px;background:#fff;border:1px solid #c6c6c6"></div>
<div class="a" style="left:1584px;top:219px;font-size:13px;color:#222">No Selection</div>
<svg class="a" style="left:1865px;top:222px" width="14" height="10"><path d="M2,2.5 L7,7.5 L12,2.5" stroke="#444" stroke-width="1.2" fill="none"/></svg>
<svg class="a" style="left:1887px;top:217px" width="20" height="18" viewBox="0 0 20 18"><path d="M2,2 H15 L10,8 V15 L7,13 V8 Z" fill="none" stroke="#555" stroke-width="1.2"/><path d="M16,9 L12,14 H15 L13,17 L18,12 H15 Z" fill="#f0b030"/></svg>
<div class="a" style="left:1908px;top:215px;width:23px;height:21px;background:#c3dbf3"></div>
<svg class="a" style="left:1908px;top:215px" width="23" height="21" viewBox="0 0 23 21"><path d="M3,10.5 C7,4 16,4 20,10.5 C16,17 7,17 3,10.5 Z" fill="none" stroke="#3a4a5a" stroke-width="1.3"/><circle cx="11.5" cy="10.5" r="3.2" fill="#3a4a5a"/><circle cx="12.5" cy="9.5" r="1" fill="#c3dbf3"/></svg>
<div class="a" style="left:1595px;top:243px;width:1px;height:483px;background:#d9d9d9"></div>
<div class="ph" style="top:243px">General</div>
<div class="pm" style="top:248px"></div>
<div class="pr" style="top:264px"><div class="c"></div><div class="k">Color</div>
<div class="a" style="left:115px;top:3px;width:16px;height:15px;border:1px solid #333;background:#fff"></div><div class="v" style="left:137px">ByLayer</div>
</div>
<div class="pr" style="top:285px"><div class="c"></div><div class="k">Layer</div>
<div class="v">0</div>
</div>
<div class="pr" style="top:306px"><div class="c"></div><div class="k">Linetype</div>
<div class="a" style="left:113px;top:10px;width:118px;height:1px;background:#222"></div><div class="v" style="left:236px">Continuous</div>
</div>
<div class="pr" style="top:327px"><div class="c"></div><div class="k">Linetype scale</div>
<div class="v">1</div>
</div>
<div class="pr" style="top:348px"><div class="c"></div><div class="k">Lineweight</div>
<div class="a" style="left:113px;top:10px;width:118px;height:1px;background:#222"></div><div class="v" style="left:236px">Default</div>
</div>
<div class="pr" style="top:369px"><div class="c"></div><div class="k">Transparency</div>
<div class="v">0</div>
</div>
<div class="pr" style="top:390px"><div class="c"></div><div class="k">Elevation</div>
<div class="v">0 mm</div>
</div>
<div class="ph" style="top:411px">View</div>
<div class="pm" style="top:416px"></div>
<div class="pm pp" style="top:437px"></div>
<div class="pr" style="top:432px"><div class="c"></div><div class="k">Camera</div>
<div class="v">-23658.89, -38572.09, 13233.9</div>
</div>
<div class="pm pp" style="top:458px"></div>
<div class="pr" style="top:453px"><div class="c"></div><div class="k">Target</div>
<div class="v">-1299.33, -2528.81, 4824.5</div>
</div>
<div class="pr" style="top:474px"><div class="c"></div><div class="k">Perspective</div>
<div class="v">On</div>
</div>
<div class="pr" style="top:495px"><div class="c"></div><div class="k">Lens length</div>
<div class="v">50 mm</div>
</div>
<div class="pr" style="top:516px"><div class="c"></div><div class="k">Field of view</div>
<div class="v">38.58</div>
</div>
<div class="pr" style="top:537px"><div class="c"></div><div class="k">Height</div>
<div class="v" style="color:#8a8a8a">22.52356 m</div>
</div>
<div class="pr" style="top:558px"><div class="c"></div><div class="k">Width</div>
<div class="v" style="color:#8a8a8a">32.16811 m</div>
</div>
<div class="pr" style="top:579px"><div class="c"></div><div class="k">Clipping</div>
<div class="v">Off</div>
</div>
<div class="pr" style="top:600px"><div class="c"></div><div class="k">Front plane</div>
<div class="v">43.24102 m</div>
</div>
<div class="pr" style="top:621px"><div class="c"></div><div class="k">Back plane</div>
<div class="v">0 mm</div>
</div>
<div class="pr" style="top:642px"><div class="c"></div><div class="k">Visual style</div>
<div class="v">Bim</div>
</div>
<div class="ph" style="top:663px">Misc</div>
<div class="pm" style="top:668px"></div>
<div class="pr" style="top:684px"><div class="c"></div><div class="k">Annotation scale</div>
<div class="v">1:1</div>
</div>
<div class="pr" style="top:705px"><div class="c"></div><div class="k">Default lighting</div>
<div class="v">Off</div>
</div>
<svg class="a" style="left:1937px;top:208px" width="48" height="500" viewBox="1937 208 48 500" fill="none" stroke="#555" stroke-width="1.3"><path d="M1949,230 H1974 M1949,238 H1974 M1949,246 H1974"/><g fill="#f0f0f0"><circle cx="1955" cy="230" r="3"/><circle cx="1968" cy="238" r="3"/><circle cx="1959" cy="246" r="3"/></g><path d="M1961,302 C1951,296 1949,290 1951,285 C1953,278 1969,278 1971,285 C1973,290 1971,296 1961,302 Z M1961,280 C1956,286 1957,296 1961,302 C1965,296 1966,286 1961,280 Z M1951,286 C1955,288 1967,288 1971,286"/><rect x="1958.5" y="302" width="5" height="4"/><circle cx="1961" cy="348" r="12"/><circle cx="1956" cy="348" r="1.2" fill="#555"/><path d="M1960,343 A6,6 0 0 1 1960,353 M1964,339.5 A10,10 0 0 1 1964,356.5"/><path d="M1949.5,393.5 H1972.5 V397 H1949.5 Z M1949.5,400 H1972.5 V406 H1949.5 Z M1949.5,409 H1972.5 V413 H1949.5 Z"/><path d="M1952,395 h1 M1956,395 h1 M1960,395 h1 M1964,395 h1 M1968,395 h1 M1953,403 h1 M1958,403 h1 M1963,403 h1 M1968,403 h1" stroke-width="1.2"/><path d="M1950,446.5 H1972 M1950,468.5 H1972 M1955,446.5 V450 Q1958,452 1958,456 V460 Q1958,464 1955,466 V468.5 M1967,446.5 V450 Q1964,452 1964,456 V460 Q1964,464 1967,466 V468.5"/><path d="M1951,511 L1967,501 L1972,504 L1956,514 Z M1950,516 L1954,518 L1972,508 M1950,521 L1954,523 L1972,513 M1951,511 L1950,516 M1950,516 L1950,521"/><path d="M1961,557 L1972,563 V576 L1961,582 L1950,576 V563 Z M1950,563 L1961,569 L1972,563 M1961,569 V582"/><ellipse cx="1961" cy="557" rx="3.5" ry="2"/><path d="M1957.5,557 V561 M1964.5,557 V561"/><path d="M1955,631 H1950 C1945,631 1945,623 1950,622 C1950,615 1958,612 1962,617 C1966,614 1972,617 1972,622 C1977,623 1977,631 1972,631 Z"/><path d="M1959,620 V627 M1957,622 L1959,620 M1963,620 V627 L1965,625" stroke-width="1.1"/><path d="M1965,667 L1973,676 L1968,677 L1964,682 L1963,688 L1958,683 L1951,689 L1956,681 L1951,677 L1957,675 L1961,672 Z"/></svg>
<div class="a" style="left:72px;top:992px;width:96px;height:22px;background:#d2d2d2"></div>
<div class="a" style="left:168px;top:992px;width:176px;height:22px;background:#f0f0f0"></div>
<div class="a" style="left:228px;top:993px;width:1px;height:20px;background:#d0d0d0"></div>
<div class="a" style="left:294px;top:993px;width:1px;height:20px;background:#d0d0d0"></div>
<div class="a" style="left:318px;top:993px;width:1px;height:20px;background:#d0d0d0"></div>
<div class="a" style="left:343px;top:993px;width:1px;height:20px;background:#d0d0d0"></div>
<svg class="a" style="left:89px;top:994px" width="20" height="18" viewBox="0 0 20 18"><rect x="1.5" y="1.5" width="17" height="15" fill="none" stroke="#555" stroke-width="1.2"/><path d="M5,4 V13 H15" stroke="#777" stroke-width="1" fill="none"/><circle cx="5" cy="13" r="1.2" fill="#666"/></svg>
<div class="st" style="left:112px;top:995px;font-size:14px">Model</div>
<div class="st" style="left:174px;top:995px;font-size:14px;color:#333">Layout1</div>
<div class="st" style="left:238px;top:995px;font-size:14px;color:#333">Layout2</div>
<svg class="a" style="left:296px;top:993px" width="48" height="21" viewBox="296 993 48 21" stroke="#444" stroke-width="1.2" fill="none"><path d="M306.5,996 V1011 M299,1003.5 H314"/><path d="M323,997.5 H339 M323,1001.5 H339 M323,1005.5 H339 M323,1009.5 H339" stroke="#666" stroke-width="1"/></svg>
<div class="a" style="left:814px;top:991px;width:1167px;height:24px;background:#f4f4f4"></div>
<div class="sb" style="left:1195px;width:78px"></div>
<div class="sb" style="left:1277px;width:86px"></div>
<div class="sb" style="left:1366px;width:104px"></div>
<div class="a" style="left:1442px;top:993px;width:1px;height:21px;background:#b9cfee"></div>
<div class="sb" style="left:1474px;width:62px"></div>
<div class="sb" style="left:1539px;width:98px"></div>
<div class="a" style="left:1607px;top:993px;width:1px;height:21px;background:#b9cfee"></div>
<div class="st" style="left:850px">TILE</div>
<div class="st" style="left:916px">1:1</div>
<div class="st" style="left:972px">GRID</div>
<div class="st" style="left:1041px">SNAP</div>
<div class="st" style="left:1141px">ORTHO</div>
<div class="st" style="left:1225px">POLAR</div>
<div class="st" style="left:1305px">STRACK</div>
<div class="st" style="left:1396px">ESNAP</div>
<div class="st" style="left:1503px">DYN</div>
<div class="st" style="left:1569px">QUAD</div>
<div class="st" style="left:1668px">HIDE ENTITIES</div>
<div class="st" style="left:1797px">BIM</div>
<svg class="a" style="left:814px;top:991px" width="1167" height="24" viewBox="814 991 1167 24" fill="none" stroke="#444" stroke-width="1.2">
<rect x="826" y="994" width="19" height="17" stroke="#555"/><path d="M830,997 V1007 H841 M838,1005 l3,3 M841,1005 l-3,3" stroke="#666" stroke-width="1"/>
<path d="M900,995 V1004 L893,1011 M900,1004 L907,1011 M897,998 L900,995 L903,998 M893,1007 V1011 H897 M907,1007 V1011 H903" stroke="#4a8ae0"/>
<path d="M953,995 V1011 M958,995 V1011 M949,999 H962 M949,1004 H962 M951,1009 H962" stroke="#333" stroke-width="1.3"/>
<path d="M1022,995 V1011 M1027,995 V1011 M1018,999 H1031 M1018,1004 H1031 M1020,1009 H1031" stroke="#d86060" stroke-width="1.1"/>
<path d="M1089,1000 L1093,1004 L1097,1000" stroke="#555"/>
<path d="M1119,995 V1011 M1119,1004 H1124 V1011" stroke="#60a060"/><path d="M1119,1011.5 H1133" stroke="#d86060"/>
<circle cx="1209" cy="1004" r="6" stroke="#555"/><path d="M1205,1008 L1215,996 M1209,1004 H1219" stroke="#555" stroke-width="1.1"/>
<path d="M1284,1011 L1298,996" stroke="#555"/><path d="M1284,1011 H1300" stroke="#d86060"/><rect x="1282.5" y="1009" width="3" height="3" stroke="#d86060"/>
<path d="M1374,1011 V1003 A6.5,6.5 0 0 1 1387,1003 V1011" stroke="#d86060" stroke-width="3.2"/><path d="M1372.5,1008 H1376 M1385.5,1008 H1389" stroke="#555" stroke-width="3"/>
<path d="M1453,1000 L1457,1004 L1461,1000" stroke="#555"/>
<path d="M1482,995 V1001 M1479,998 H1485" stroke="#555"/><rect x="1484.5" y="1005.5" width="13" height="5" stroke="#555"/>
<path d="M1546,995 V1000 M1543.5,997.5 H1548.5" stroke="#555"/><rect x="1548.5" y="998.5" width="14" height="13" stroke="#555"/><path d="M1548.5,1002 H1562.5" stroke="#555"/><path d="M1551,1005 h2 M1555,1005 h2 M1559,1005 h2 M1551,1008 h2 M1555,1008 h2" stroke="#444" stroke-width="1.6"/>
<path d="M1618,1000 L1622,1004 L1626,1000" stroke="#555"/>
<path d="M1650,1006 C1647,1004 1647,1001 1647,999.5 A6,6 0 0 1 1659,999.5 C1659,1001 1659,1004 1656,1006 V1009 H1650 Z M1651,1011 H1655 M1653,1000 V1005" stroke="#555"/>
<rect x="1777.5" y="994.5" width="16" height="16" stroke="#555"/><path d="M1777.5,999 H1793.5 M1781,999 V1010.5" stroke="#555"/><path d="M1780,996.8 h1 M1783,996.8 h1 M1786,996.8 h1" stroke-width="1.5"/>
<path d="M1880,1000 L1885,1005 L1890,1000" stroke="#aaa"/>
<path d="M1916,1008 C1918,1006 1918,1003 1918,1001 A5,5 0 0 1 1928,1001 C1928,1003 1928,1006 1930,1008 Z M1921,1010 A2,2 0 0 0 1925,1010" stroke="#c8c8c8"/>
<g fill="#444" stroke="none"><circle cx="1961" cy="997" r="1.8"/><circle cx="1961" cy="1003.5" r="1.8"/><circle cx="1961" cy="1010" r="1.8"/></g>
</svg>
<div class="a" style="left:545px;top:957px;width:600px;height:25px;background:#3d4146"></div>
<svg class="a" style="left:550px;top:960px" width="12" height="20"><g fill="#ccc"><rect x="3" y="2" width="2" height="2"/><rect x="3" y="6" width="2" height="2"/><rect x="3" y="10" width="2" height="2"/><rect x="3" y="14" width="2" height="2"/><rect x="9" y="8" width="2" height="2"/><rect x="9" y="13" width="2" height="2"/></g></svg>
<div class="a" style="left:578px;top:964px;font-family:'Liberation Mono',monospace;font-style:italic;font-size:15px;color:#a8a8a8">Enter command</div>
<svg class="a" style="left:1120px;top:963px" width="16" height="10"><path d="M3,8 L8,3 L13,8 Z" fill="#e8e8e8"/></svg>

<div class="box" style="left:66px;top:4px;width:321px;height:29px"></div>
<div class="box" style="left:66px;top:34px;width:1918px;height:161px"></div>
<div class="box" style="left:114px;top:197px;width:321px;height:24px"></div>
<div class="box" style="left:66px;top:221px;width:51px;height:152px"></div>
<div class="box" style="left:1934px;top:205px;width:53px;height:508px"></div>
<div class="box" style="left:69px;top:989px;width:285px;height:28px"></div>
<div class="box" style="left:542px;top:954px;width:606px;height:31px"></div>
<div class="box" style="left:811px;top:988px;width:1173px;height:31px"></div>
<svg class="a" style="left:0;top:0" width="1988" height="1019" viewBox="0 0 1988 1019">
<path d="M64.0,21.0 L32.1,38.5 A20,20 0 1 1 32.1,3.5 Z" fill="#4190f5"/>
<text x="27.0" y="29.3" class="cn" font-size="23" fill="#fff" stroke="#fff" stroke-width="0.5" text-anchor="middle">1</text>
<path d="M64.2,115.0 L32.3,132.5 A20,20 0 1 1 32.3,97.5 Z" fill="#4190f5"/>
<text x="27.2" y="123.3" class="cn" font-size="23" fill="#fff" stroke="#fff" stroke-width="0.5" text-anchor="middle">2</text>
<path d="M108.0,206.5 L76.3,223.7 A19.5,19.5 0 1 1 76.3,189.3 Z" fill="#4190f5"/>
<text x="71.5" y="214.8" class="cn" font-size="23" fill="#fff" stroke="#fff" stroke-width="0.5" text-anchor="middle">3</text>
<path d="M64.5,291.0 L32.6,308.5 A20,20 0 1 1 32.6,273.5 Z" fill="#4190f5"/>
<text x="27.5" y="299.3" class="cn" font-size="23" fill="#fff" stroke="#fff" stroke-width="0.5" text-anchor="middle">4</text>
<path d="M1961.5,203.5 L1944.3,171.2 A19.5,19.5 0 1 1 1978.7,171.2 Z" fill="#4190f5"/>
<text x="1961.8" y="175.3" class="cn" font-size="23" fill="#fff" stroke="#fff" stroke-width="0.5" text-anchor="middle">4</text>
<path d="M1479.5,271.0 L1446.7,288.8 A20.3,20.3 0 1 1 1446.7,253.2 Z" fill="#4190f5"/>
<text x="1441.5" y="279.3" class="cn" font-size="23" fill="#fff" stroke="#fff" stroke-width="0.5" text-anchor="middle">5</text>
<path d="M836.8,793.0 L854.3,824.2 A20,20 0 1 1 819.3,824.2 Z" fill="#4190f5"/>
<text x="837.1" y="837.3" class="cn" font-size="23" fill="#fff" stroke="#fff" stroke-width="0.5" text-anchor="middle">6</text>
<path d="M168.0,984.0 L150.4,953.0 A20.2,20.2 0 1 1 185.6,953.0 Z" fill="#4190f5"/>
<text x="168.3" y="956.3" class="cn" font-size="23" fill="#fff" stroke="#fff" stroke-width="0.5" text-anchor="middle">7</text>
<path d="M1129.0,951.0 L1111.4,920.0 A20.2,20.2 0 1 1 1146.6,920.0 Z" fill="#4190f5"/>
<text x="1129.3" y="923.3" class="cn" font-size="23" fill="#fff" stroke="#fff" stroke-width="0.5" text-anchor="middle">8</text>
<path d="M1410.0,983.7 L1392.4,952.7 A20.2,20.2 0 1 1 1427.6,952.7 Z" fill="#4190f5"/>
<text x="1410.3" y="956.0" class="cn" font-size="23" fill="#fff" stroke="#fff" stroke-width="0.5" text-anchor="middle">9</text>
</svg></body></html>
